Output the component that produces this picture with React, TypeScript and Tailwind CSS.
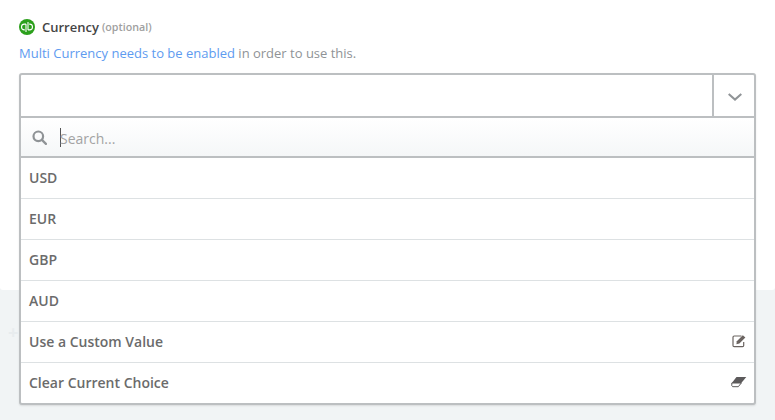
import React from 'react'

const options = ['USD', 'EUR', 'GBP', 'AUD']

const QuickbooksLogo = () => (
  <svg width="16" height="16" viewBox="0 0 16 16">
    <circle cx="8" cy="8" r="8" fill="#2ca01c" />
    <path d="M7 5.100H5.400a2.900 2.900 0 0 0 0 5.800h.4" fill="none" stroke="#fff" strokeWidth="1.100" />
    <path d="M9 10.900h1.600a2.900 2.900 0 0 0 0-5.800h-.4" fill="none" stroke="#fff" strokeWidth="1.100" />
    <path d="M7 5v8M9 3v8" fill="none" stroke="#fff" strokeWidth="1.100" />
  </svg>
)

const SearchIcon = () => (
  <svg width="15" height="15" viewBox="0 0 15 15" fill="none" stroke="#8f9396" strokeWidth="2.200">
    <circle cx="6.300" cy="6.300" r="4.800" />
    <path d="M9.900 9.900l4 4" strokeLinecap="round" />
  </svg>
)

const ChevronIcon = () => (
  <svg width="14" height="8" viewBox="0 0 14 8" fill="none" stroke="#909497" strokeWidth="2">
    <path d="M.7.900L7 6.600 13.300.900" />
  </svg>
)

const EditIcon = () => (
  <svg width="15" height="14" viewBox="0 0 15 14" fill="none">
    <path d="M9.500 2H2.200C1.500 2 1 2.500 1 3.200V11.500c0 .7.5 1.200 1.200 1.200h8.300c.7 0 1.200-.5 1.200-1.200V8" stroke="#6b6461" strokeWidth="1.200" />
    <path d="M4.800 7.300L10.800 1.300l2.600 2.300-6 6-3 .6z" fill="#6b6461" />
  </svg>
)

const EraserIcon = () => (
  <svg width="16" height="12" viewBox="0 0 16 12" fill="none">
    <path d="M5.500 1H15.300L10.300 7H.8z" fill="#5c5a5b" />
    <path d="M.8 7h9.500l-3 3.700H1.700L.8 9.800z" fill="#fff" stroke="#5c5a5b" strokeWidth="1" />
  </svg>
)

const OptionRow: React.FC<{ label: string; icon?: React.ReactNode }> = ({ label, icon }) => (
  <div className="flex h-[41px] items-center justify-between border-b border-[#dde1e3] pl-[8px] pr-[7px] pb-[2px] last:h-[40px] last:border-b-0">
    <span className="text-[14px] font-semibold text-[#6b6b6b]">{label}</span>
    {icon}
  </div>
)

export default function App() {
  return (
    <div className="relative h-[420px] w-[775px] overflow-hidden bg-[#f1f4f5] font-['Open_Sans',sans-serif]">
      {/* white card behind the open dropdown */}
      <div className="absolute inset-x-0 top-0 h-[290px] rounded-b-[3px] bg-white" />
      <span className="absolute left-[8px] top-[322px] text-[18px] font-bold leading-[20px] text-[#e8ecee]">+</span>

      <div className="relative px-[19px] pt-[19px]">
        <div className="flex h-[16px] items-center">
          <QuickbooksLogo />
          <span className="ml-[7px] mt-[1px] text-[13px] font-semibold text-[#444444]">Currency</span>
          <span className="ml-[3px] mt-[1px] text-[10.700px] font-semibold text-[#a0a0a0]">(optional)</span>
        </div>
        <p className="mt-[8px] h-[20px] text-[13px] leading-[20px] text-[#8f9396]">
          <span className="text-[#5e9bf0]">Multi Currency needs to be enabled</span> in order to use this.
        </p>

        <div className="mt-[10px] w-[737px] rounded-[3px] border-2 border-[#bcbfc1] bg-white shadow-[0_1px_2px_rgba(0,0,0,0.1)]">
          <div className="flex h-[43px] border-b-2 border-[#bcbfc1]">
            <div className="flex-1" />
            <div className="flex w-[42px] items-center justify-center border-l-2 border-[#bcbfc1] pt-[2px] pl-[1px]">
              <ChevronIcon />
            </div>
          </div>
          <div className="flex h-[40px] items-center border-b-2 border-[#bcbfc1] bg-gradient-to-b from-white to-[#f5f7f8] pl-[11px]">
            <SearchIcon />
            <span className="ml-[13px] h-[19px] w-px bg-[#555555]" />
            <span className="-ml-px mt-[2px] text-[14px] text-[#a3a3a3]">Search...</span>
          </div>
          {options.map((option) => (
            <OptionRow key={option} label={option} />
          ))}
          <OptionRow label="Use a Custom Value" icon={<EditIcon />} />
          <OptionRow label="Clear Current Choice" icon={<EraserIcon />} />
        </div>
      </div>
    </div>
  )
}
